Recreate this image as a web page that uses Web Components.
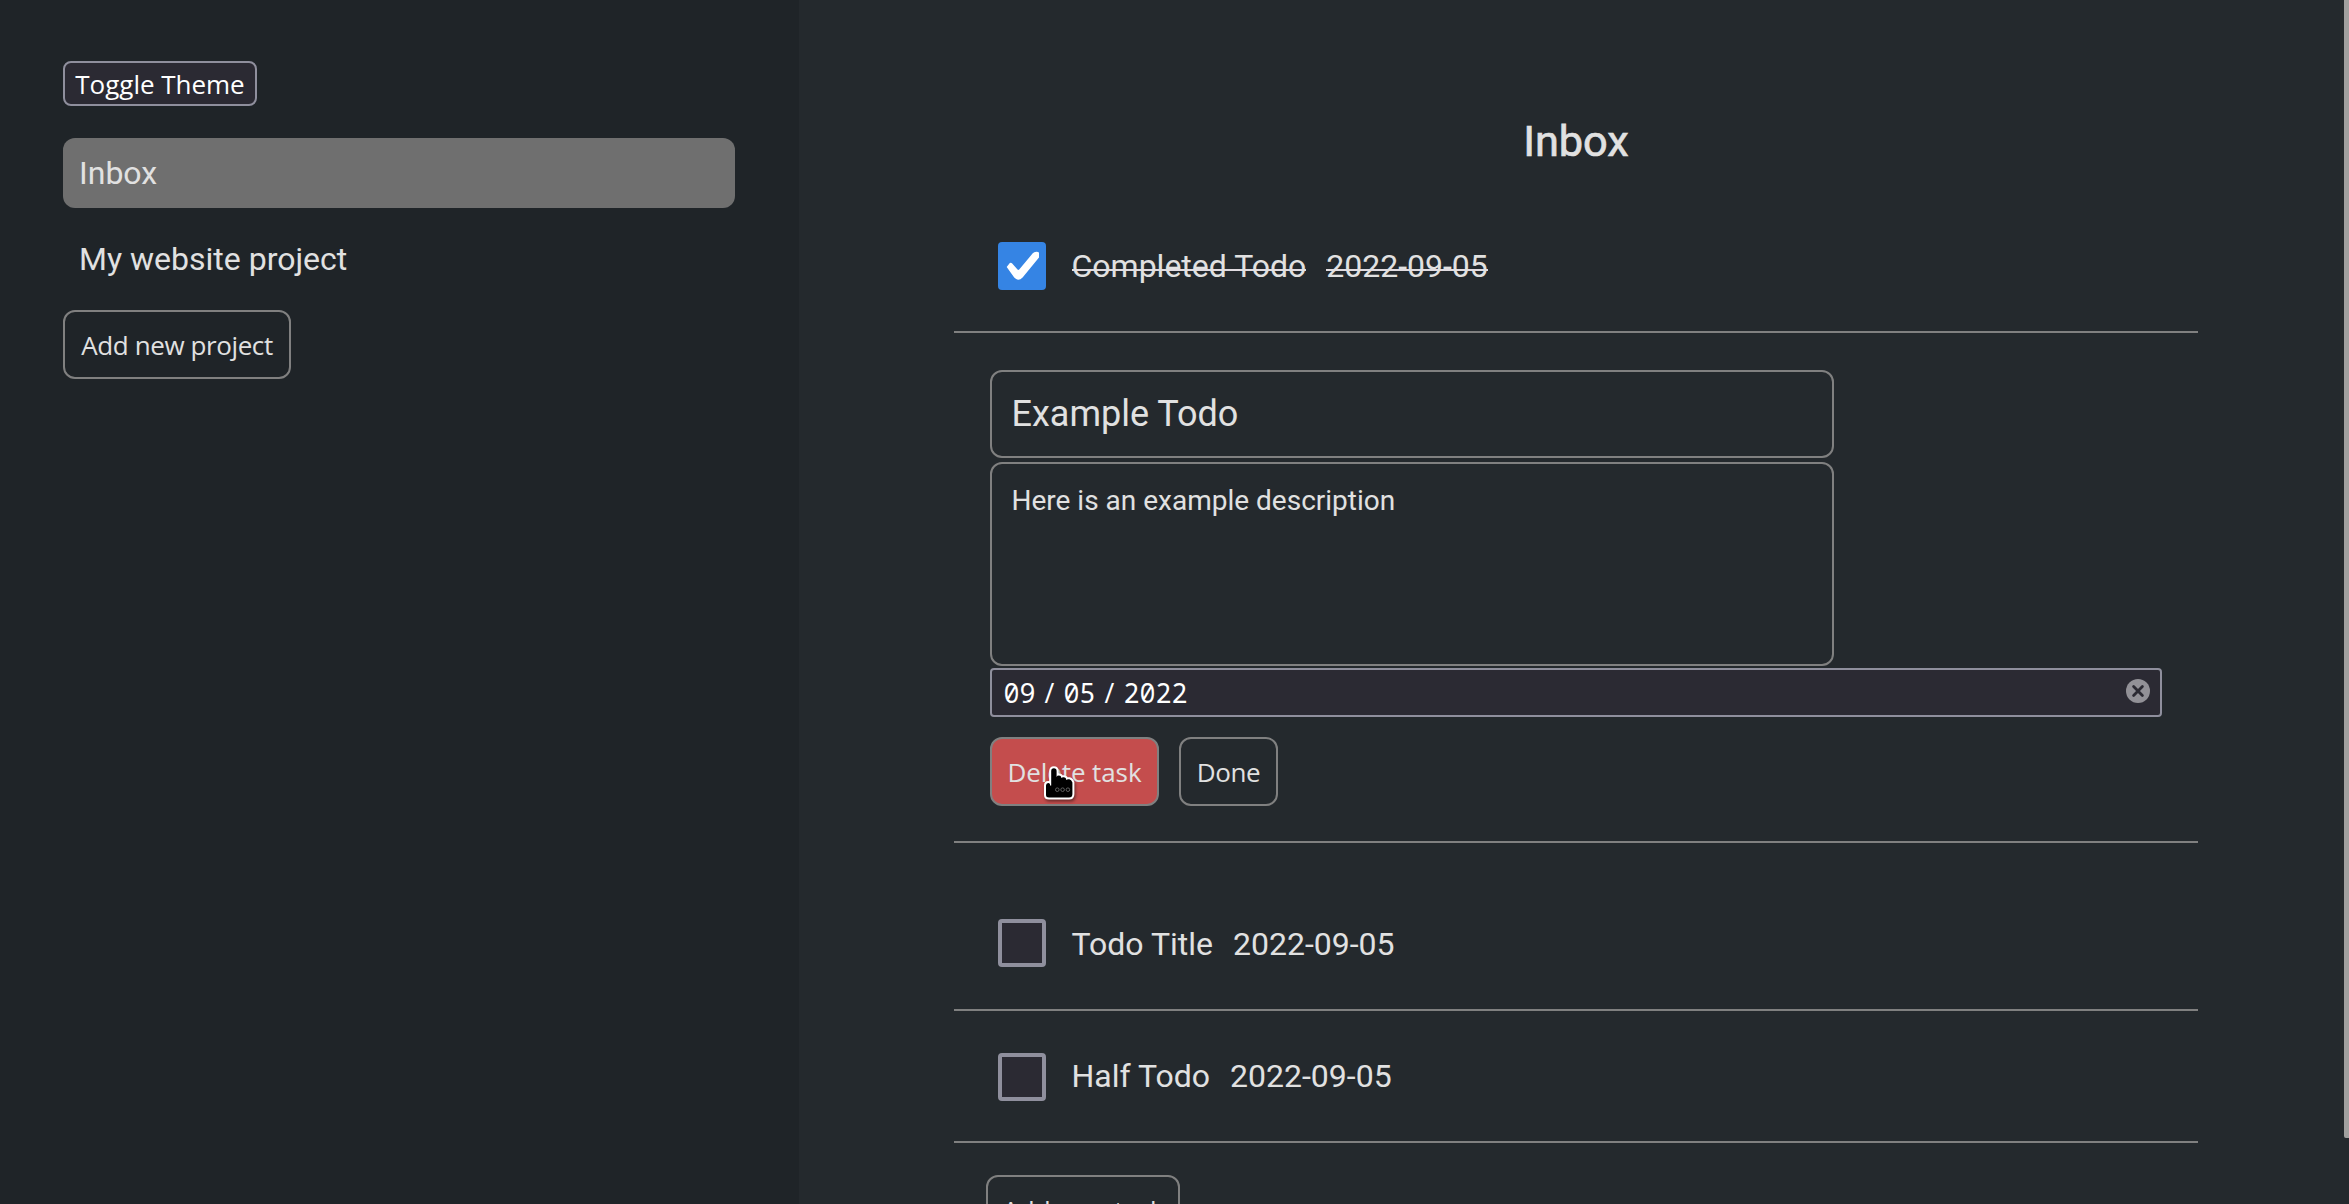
<!DOCTYPE html>
<html lang="en">
<head>
<meta charset="utf-8">
<title>Todo</title>
<style>
html,body{margin:0;height:100%;overflow:hidden}
body{font-family:Roboto,sans-serif;color:#e1e1e1;background:#24292d}
</style>
</head>
<body>
<todo-app></todo-app>
<script>
const define=(name,css,html)=>customElements.define(name,class extends HTMLElement{
  constructor(){
    super();
    this.attachShadow({mode:'open'}).innerHTML=`<style>*{box-sizing:border-box}${css}</style>${html}`;
  }
});

define('app-button',`
:host{display:block;box-sizing:border-box;width:var(--w);height:var(--h,69px);position:relative;flex:none}
button{width:100%;height:100%;margin:0;padding:0;display:flex;align-items:center;justify-content:center;
 font:26px "Open Sans",sans-serif;letter-spacing:var(--ls,-.1px);color:inherit;background:transparent;
 border:2px solid #808080;border-radius:12px;white-space:nowrap}
:host([variant=native]) button{background:#2b2a33;border-color:#8f8f9d;color:#fff;border-radius:8px;padding-top:1px}
:host([variant=danger]) button{background:#c44d4d}
`,`<button><slot></slot></button><slot name="overlay"></slot>`);

define('project-item',`
:host{display:flex;align-items:center;height:70px;padding-left:16px;box-sizing:border-box;border-radius:12px;font-size:32px}
:host([active]){background:#6f6f6f}
`,`<slot></slot>`);

define('side-bar',`
:host{display:flex;flex-direction:column;gap:16px;width:799px;flex:none;box-sizing:border-box;padding:61px 64px 0 63px;background:#1f2428}
.toggle{--w:194px;--h:45px;margin-bottom:16px;--ls:-.02px}
.add{--w:228px;--ls:-.4px}
`,`<app-button class="toggle" variant="native">Toggle Theme</app-button>
<project-item active>Inbox</project-item>
<project-item>My website project</project-item>
<app-button class="add">Add new project</app-button>`);

define('check-box',`
:host{display:block;width:48px;height:48px;box-sizing:border-box;border:4px solid #8f8f9d;border-radius:4px;background:#2b2a33;flex:none}
:host([checked]){border:0;background:#3584e4}
svg{display:none}
:host([checked]) svg{display:block}
`,`<svg width="48" height="48" viewBox="0 0 48 48"><path fill="#fff" d="M8.7 25L11.8 21Q13 20.2 14.2 21.4L19.5 27.5Q20.3 28.3 21.2 27.5L34.5 11.6Q36 9.8 38.3 9.8L40.2 10Q41 10.3 41 11.3V15.6L24.6 35.6Q20.3 40 16.2 35.6Z"/></svg>`);

define('todo-row',`
:host{display:flex;align-items:center;height:132px;box-sizing:border-box;padding-left:44px;border-bottom:2px solid #808080;font-size:32px;white-space:nowrap}
check-box{margin:var(--nudge,0) 25.5px 0 0}
span{line-height:38px}
.date{margin-left:20px}
:host([done]) span{background:linear-gradient(#e1dce1,#e1dce1) 0 22px/100% 2px no-repeat}
`,`<check-box></check-box><span><slot></slot></span><span class="date"><slot name="date"></slot></span>`);

define('date-field',`
:host{display:flex;align-items:center;height:49px;box-sizing:border-box;border:2px solid #8f8f9d;border-radius:4px;background:#2b2a33;color:#fff;
 font:26.67px "Noto Sans Mono",monospace;padding:0 10px 0 11.5px}
i{font:normal 26.67px "Open Sans",sans-serif;width:28px;text-align:center}
svg{margin:-3px 0 0 auto}
`,`<span>09</span><i>/</i><span>05</span><i>/</i><span>2022</span>
<svg width="24" height="24" viewBox="0 0 24 24"><circle cx="12" cy="12" r="12" fill="#929197"/><path d="M7.6 7.6l8.8 8.8M16.4 7.6l-8.8 8.8" stroke="#2b2a33" stroke-width="2.8" stroke-linecap="round"/></svg>`);

define('hand-cursor',`
:host{position:absolute;left:54px;top:29px;display:block;filter:drop-shadow(1px 2px 1.5px #0007)}
svg{display:block;overflow:visible}
`,`<svg width="32" height="35" viewBox="0 0 32 35"><path d="M7.2 19.5V5Q7.2 2.2 9.9 2.2T12.6 5V11Q12.9 9.6 15 9.6T17.4 12Q17.9 11 20 11.2T22.4 14Q23.2 12.9 25.3 13.3T28.4 16.5V28Q28.4 31.5 25 31.5H5Q2 31.5 2 29V19.5Q2 17 4.2 17T6 19.5Z" fill="#000" stroke="#fff" stroke-width="4" stroke-linejoin="round" paint-order="stroke"/><g fill="none" stroke="#6a6a6a" stroke-width=".9"><circle cx="13.3" cy="23.7" r="1.8"/><circle cx="18.6" cy="23.7" r="1.8"/><circle cx="23.9" cy="23.7" r="1.8"/></g></svg>`);

define('todo-editor',`
:host{display:block;height:510px;box-sizing:border-box;padding:37px 36px 0;border-bottom:2px solid #808080;margin-bottom:36px}
.field{width:844px;border:2px solid #808080;border-radius:12px;padding:0 19.5px}
.title{height:88px;font-size:36px;display:flex;align-items:center;margin-bottom:4px}
.desc{height:204px;font-size:28px;line-height:33px;padding-top:20px;margin-bottom:2px}
.actions{display:flex;gap:20px;margin-top:20px}
`,`<div class="field title">Example Todo</div>
<div class="field desc">Here is an example description</div>
<date-field></date-field>
<div class="actions"><app-button variant="danger" style="--w:169px"><span>Delete task</span><hand-cursor slot="overlay"></hand-cursor></app-button><app-button style="--w:99px;--ls:-.4px">Done</app-button></div>`);

define('todo-list',`
:host{display:block;flex:1;box-sizing:border-box;padding:116px 151px 0 155px;position:relative}
h1{margin:0 0 33px;font-size:43.3px;font-weight:400;-webkit-text-stroke:.7px currentColor;line-height:52px;text-align:center}
.add{--w:194px;margin:32px 0 0 32px}
.thumb{position:absolute;right:0;top:0;width:5px;height:1138px;background:#a1a09f;border-bottom-left-radius:2px}
`,`<h1>Inbox</h1>
<todo-row done>Completed Todo<span slot="date">2022-09-05</span></todo-row>
<todo-editor></todo-editor>
<todo-row style="--nudge:-2px">Todo Title<span slot="date">2022-09-05</span></todo-row>
<todo-row style="--nudge:1px">Half Todo<span slot="date">2022-09-05</span></todo-row>
<app-button class="add">Add new task</app-button>
<div class="thumb"></div>`);

define('todo-app',`:host{display:flex;height:100vh;overflow:hidden}`,`<side-bar></side-bar><todo-list></todo-list>`);

document.querySelector('todo-app').shadowRoot.querySelector('todo-list').shadowRoot
  .querySelector('todo-row[done]').shadowRoot.querySelector('check-box').setAttribute('checked','');
</script>
</body>
</html>
